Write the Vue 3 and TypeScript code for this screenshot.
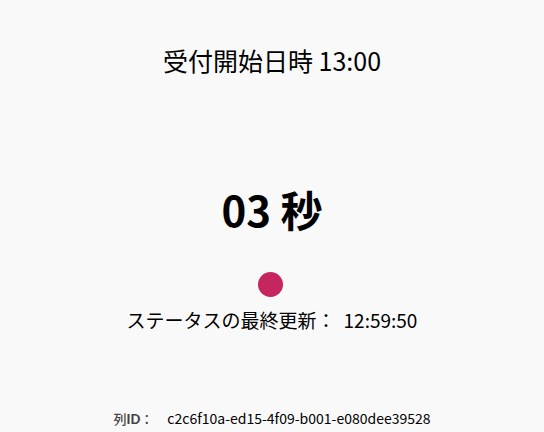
<script setup lang="ts">
const opensAt = '13:00'
const secondsLeft = '03'
const lastUpdate = '12:59:50'
const queueId = 'c2c6f10a-ed15-4f09-b001-e080dee39528'
</script>

<template>
  <main class="waiting-room">
    <h1 class="opening">受付開始日時 {{ opensAt }}</h1>
    <p class="countdown">{{ secondsLeft }} 秒</p>
    <span class="pulse" aria-hidden="true"></span>
    <p class="status">
      <span>ステータスの最終更新：</span>
      <time>{{ lastUpdate }}</time>
    </p>
    <dl class="queue">
      <dt>列<span class="latin">ID</span>：</dt>
      <dd>{{ queueId }}</dd>
    </dl>
  </main>
</template>

<style>
body {
  background: #f9f9f9;
}
</style>

<style scoped>
.waiting-room {
  display: flex;
  flex-direction: column;
  align-items: center;
  padding-top: 42px;
  color: #000;
  font-family: "Noto Sans CJK JP", sans-serif;
  text-align: center;
}

.opening,
.countdown,
.status,
.queue,
.queue dd {
  margin: 0;
}

.opening {
  font-size: 25px;
  font-weight: 400;
  line-height: 36px;
}

.countdown {
  margin-top: 100px;
  font-size: 42px;
  font-weight: 700;
  line-height: 62px;
}

.pulse {
  width: 25px;
  height: 25px;
  margin-top: 32px;
  margin-right: 4px;
  border-radius: 50%;
  background: #c6265f;
}

.status {
  display: flex;
  align-items: baseline;
  gap: 8px;
  margin-top: 9px;
  font-size: 19px;
  line-height: 28px;
}

.queue {
  display: flex;
  align-items: baseline;
  gap: 14px;
  margin-top: 74px;
  font-size: 14px;
  line-height: 20px;
}

.queue dt {
  color: #444;
  font-size: 13px;
  font-weight: 500;
}

.latin {
  font-family: Lato, sans-serif;
  font-weight: 900;
}
</style>
